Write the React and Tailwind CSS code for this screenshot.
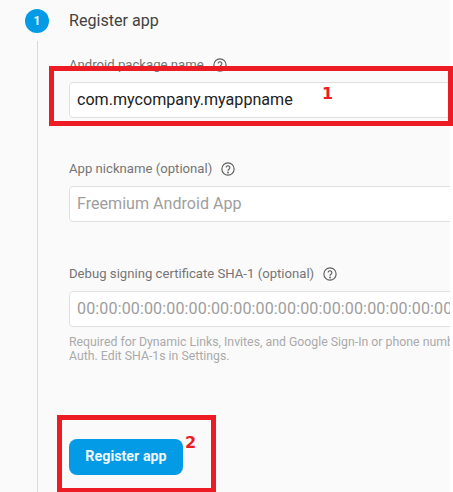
function HelpIcon() {
  return (
    <svg width="14" height="14" viewBox="0 0 24 24" fill="none" stroke="#5f5f5f" strokeWidth="2" className="shrink-0">
      <circle cx="12" cy="12" r="10.5" />
      <path d="M8.8 9.600a3.2 3.2 0 1 1 5.2 2.500c-1.2.9-2 1.500-2 3" />
      <circle cx="12" cy="18" r="0.6" fill="#5f5f5f" />
    </svg>
  );
}

function Field({ label, value, placeholder, className = "", textClass = "" }) {
  return (
    <div className={className}>
      <div className="flex h-[16px] items-center gap-[9px] text-[13.15px] leading-[16px] text-[#757575]">
        <span className="whitespace-nowrap">{label}</span>
        <HelpIcon />
      </div>
      <div className={`mt-[9px] flex h-[36px] w-[420px] items-center overflow-hidden rounded-[4px] border border-[#e0e0e0] bg-white pl-[7px] text-[16.1px] whitespace-nowrap ${textClass}`}>
        {value ? (
          <span className="text-[#212121]">{value}</span>
        ) : (
          <span className="text-[#9e9e9e]">{placeholder}</span>
        )}
      </div>
    </div>
  );
}

export default function App() {
  return (
    <div className="relative h-[492px] w-[453px] overflow-hidden bg-white font-['Roboto',sans-serif]">
      <div className="flex h-full w-[450px] overflow-hidden bg-[#fafafa] pt-[9px] pl-[25px]">
        <div className="flex w-[24px] shrink-0 flex-col items-center">
          <div className="flex h-[24px] w-[24px] items-center justify-center rounded-full bg-[#039be5] text-[12px] font-bold text-white">
            1
          </div>
          <div className="mt-[8px] w-px flex-1 bg-[#dadada]" />
        </div>
        <div className="ml-[20px] min-w-0 flex-1">
          <div className="mt-[1px] text-[16.1px] leading-[22px] text-[#424242]">Register app</div>
          <Field className="mt-[25px]" label="Android package name" value="com.mycompany.myappname" />
          <Field className="mt-[43px]" label="App nickname (optional)" placeholder="Freemium Android App" />
          <Field className="mt-[44px]" textClass="tracking-[0.11px]" label="Debug signing certificate SHA-1 (optional)" placeholder="00:00:00:00:00:00:00:00:00:00:00:00:00:00:00:00:00:00:00:00" />
          <p className="mt-[8px] w-[420px] text-[12.3px] leading-[14px] text-[#aaaaaa]">
            <span className="block whitespace-nowrap">Required for Dynamic Links, Invites, and Google Sign-In or phone number</span>
            <span className="block">Auth. Edit SHA-1s in Settings.</span>
          </p>
          <button className="mt-[76px] flex h-[36px] w-[114px] items-center justify-center rounded-[8px] bg-[#039be5] text-[14.3px] font-bold text-[#eef8fd]">
            Register app
          </button>
        </div>
      </div>

      {/* red annotations drawn over the screenshot */}
      <div className="absolute top-[66px] left-[49px] h-[60px] w-[404px] border-[5px] border-[#ed1c24]" />
      <div className="absolute top-[415px] left-[57px] h-[78px] w-[159px] border-[5px] border-[#ed1c24]" />
      <span className="absolute top-[84px] left-[322px] font-['DejaVu_Sans',sans-serif] text-[16px] leading-[20px] font-bold text-[#ed1c24]">1</span>
      <span className="absolute top-[433px] left-[185px] font-['DejaVu_Sans',sans-serif] text-[16px] leading-[20px] font-bold text-[#ed1c24]">2</span>
    </div>
  );
}
